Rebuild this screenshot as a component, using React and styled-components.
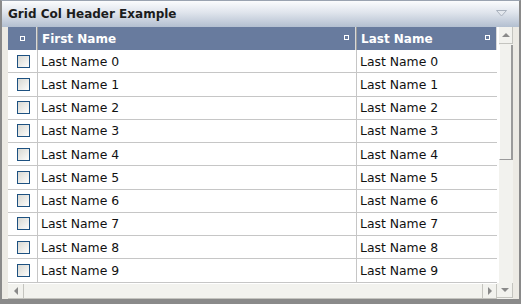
import React from "react";
import styled, { createGlobalStyle } from "styled-components";

const GlobalStyle = createGlobalStyle`
  html, body {
    margin: 0;
    padding: 0;
    background: #ffffff;
  }
  body {
    font-family: "DejaVu Sans", Verdana, sans-serif;
  }
`;

const Frame = styled.div`
  width: 521px;
  height: 304px;
  box-sizing: border-box;
  display: flex;
  flex-direction: column;
  background: #eceae4;
  border-left: 2px solid #8a8a8a;
  border-right: 2px solid #8a8a8a;
  border-bottom: 5px solid #8a8a8a;
  border-top: 1px solid #9aa3b0;
`;

const TitleBar = styled.div`
  height: 26px;
  flex: none;
  display: flex;
  align-items: center;
  justify-content: space-between;
  padding: 0 12px 1px 6px;
  box-sizing: border-box;
  background: linear-gradient(#fbfcfd, #dfe4ec 45%, #b3bfd0);
  font-size: 12px;
  font-weight: bold;
  color: #1c1c1c;
`;

const Body = styled.div`
  flex: 1;
  padding: 0 6px 1px 6px;
  display: flex;
`;

const Grid = styled.div`
  flex: 1;
  display: grid;
  grid-template-columns: 1fr 16px;
  grid-template-rows: 1fr 16px;
  background: #ffffff;
`;

const Main = styled.div`
  display: flex;
  flex-direction: column;
  overflow: hidden;
`;

const HeaderRow = styled.div`
  display: flex;
  height: 23px;
  flex: none;
  background: #687b9e;
  color: #ffffff;
  font-size: 12px;
  font-weight: bold;
`;

const HeaderCell = styled.div`
  position: relative;
  width: ${(p) => p.$w}px;
  flex: none;
  display: flex;
  align-items: center;
  justify-content: ${(p) => (p.$center ? "center" : "flex-start")};
  padding-left: ${(p) => (p.$center ? 0 : 4)}px;
  box-sizing: border-box;
  border-right: 1px solid #9a9a9a;
  box-shadow: inset -1px 0 0 #d9d9d9;
  white-space: nowrap;
  overflow: hidden;
`;

const Marker = styled.span`
  width: 3px;
  height: 3px;
  border: 1px solid #ffffff;
  ${(p) => (p.$right ? "position: absolute; right: 7px; top: 8px;" : "")}
`;

const Row = styled.div`
  display: flex;
  height: 23.25px;
  flex: none;
  box-sizing: border-box;
  border-bottom: 1px solid #c6c6c6;
  font-size: 12.4px;
  color: #111111;
`;

const Cell = styled.div`
  width: ${(p) => p.$w}px;
  flex: none;
  display: flex;
  align-items: center;
  justify-content: ${(p) => (p.$center ? "center" : "flex-start")};
  padding-left: ${(p) => (p.$center ? 1 : 3)}px;
  box-sizing: border-box;
  border-right: 1px solid #c6c6c6;
  white-space: nowrap;
  overflow: hidden;
`;

const Check = styled.span`
  width: 13px;
  height: 13px;
  box-sizing: border-box;
  border: 1px solid #1d5181;
  background: linear-gradient(135deg, #d8d8d2, #fdfdfc);
`;

const VScroll = styled.div`
  display: flex;
  flex-direction: column;
  background: #f2f2ee;
  border-left: 2px solid #ffffff;
`;

const HScroll = styled.div`
  display: flex;
  background: #f2f2ee;
  border-top: 1px solid #ffffff;
`;

const Btn = styled.div`
  width: ${(p) => p.$w || 14}px;
  height: ${(p) => p.$h || 15}px;
  flex: none;
  display: flex;
  align-items: center;
  justify-content: center;
  box-sizing: border-box;
  border-right: 1px solid #c4c4bf;
  border-bottom: 1px solid #c4c4bf;
  background: #f2f2ee;
`;

const Arrow = styled.span`
  width: 0;
  height: 0;
  ${(p) =>
    ({
      up: "border-left:4px solid transparent;border-right:4px solid transparent;border-bottom:4px solid #8a8a8a;",
      down: "border-left:4px solid transparent;border-right:4px solid transparent;border-top:4px solid #8a8a8a;",
      left: "border-top:4px solid transparent;border-bottom:4px solid transparent;border-right:4px solid #8a8a8a;",
      right: "border-top:4px solid transparent;border-bottom:4px solid transparent;border-left:4px solid #8a8a8a;",
    })[p.$dir]}
`;

const VThumb = styled.div`
  height: 115px;
  margin: 1px 0 0 0;
  box-sizing: border-box;
  border-left: 1px solid #ffffff;
  border-right: 2px solid #9a9a9a;
  border-bottom: 1px solid #9a9a9a;
  background: #f2f2ee;
`;

const HThumb = styled.div`
  flex: 1;
  box-sizing: border-box;
  border-right: 1px solid #c4c4bf;
  border-bottom: 1px solid #c4c4bf;
`;

const Corner = styled.div`
  background: #f2f2ee;
  display: flex;
  justify-content: flex-end;
`;

const rows = Array.from({ length: 10 }, (_, i) => `Last Name ${i}`);

export default function App() {
  return (
    <>
      <GlobalStyle />
      <Frame>
        <TitleBar>
          <span>Grid Col Header Example</span>
          <svg width="11" height="7" viewBox="0 0 11 7">
            <polygon points="0.5,0.5 10.5,0.5 5.5,6" fill="#e4e8ee" stroke="#a9b1bd" />
          </svg>
        </TitleBar>
        <Body>
          <Grid>
            <Main>
              <HeaderRow>
                <HeaderCell $w={30} $center>
                  <Marker />
                </HeaderCell>
                <HeaderCell $w={319}>
                  First Name
                  <Marker $right />
                </HeaderCell>
                <HeaderCell $w={141}>
                  Last Name
                  <Marker $right />
                </HeaderCell>
              </HeaderRow>
              {rows.map((name) => (
                <Row key={name}>
                  <Cell $w={30} $center>
                    <Check />
                  </Cell>
                  <Cell $w={319}>{name}</Cell>
                  <Cell $w={141}>{name}</Cell>
                </Row>
              ))}
            </Main>
            <VScroll>
              <Btn $w={14} $h={17}>
                <Arrow $dir="up" />
              </Btn>
              <VThumb />
            </VScroll>
            <HScroll>
              <Btn $w={16}>
                <Arrow $dir="left" />
              </Btn>
              <HThumb />
              <Btn $w={14}>
                <Arrow $dir="right" />
              </Btn>
            </HScroll>
            <Corner>
              <Btn $w={16}>
                <Arrow $dir="down" />
              </Btn>
            </Corner>
          </Grid>
        </Body>
      </Frame>
    </>
  );
}
